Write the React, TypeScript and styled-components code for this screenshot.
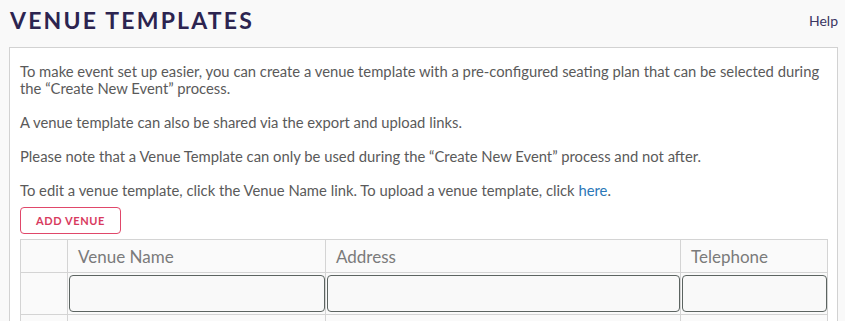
import React from 'react';
import styled, { createGlobalStyle } from 'styled-components';

const GlobalStyle = createGlobalStyle`
  html, body {
    margin: 0;
    padding: 0;
    background: #f9f9f9;
  }
  body {
    font-family: 'Lato', 'Noto Sans', sans-serif;
    color: #5a5a5a;
  }
`;

const Page = styled.div`
  padding: 0 7px 0 9px;
`;

const Header = styled.header`
  display: flex;
  align-items: center;
  justify-content: space-between;
  height: 40px;
  padding: 0 0 7px 1px;
`;

const Title = styled.h1`
  margin: 0;
  font-size: 23px;
  font-weight: 700;
  letter-spacing: 2.2px;
  color: #2c2450;
`;

const HelpLink = styled.a`
  font-size: 14px;
  color: #3a3562;
  text-decoration: none;
`;

const Panel = styled.section`
  background: #fff;
  border: 1px solid #d2d2d2;
  border-bottom: none;
  padding: 15px 10px 0;
  min-height: 280px;
`;

const Para = styled.p`
  margin: 0 0 17px;
  font-size: 14.8px;
  line-height: 17px;
  &:last-of-type {
    margin-bottom: 8px;
  }
`;

const InlineLink = styled.a`
  color: #2b78b8;
  text-decoration: none;
`;

const OutlineButton = styled.button`
  display: block;
  height: 27px;
  width: 101px;
  padding: 0;
  background: #fff;
  border: 1px solid #e0476a;
  border-radius: 4px;
  color: #d83a5e;
  font-family: inherit;
  font-size: 11px;
  font-weight: 700;
  letter-spacing: 0.6px;
  margin-bottom: 5px;
`;

const Table = styled.table`
  width: 807px;
  border-collapse: collapse;
  table-layout: fixed;
  background: #fafafa;
`;

const Th = styled.th<{ $w: number }>`
  width: ${({ $w }) => $w}px;
  height: 33px;
  border: 1px solid #d4d4d4;
  padding: 0 10px;
  text-align: left;
  font-size: 17px;
  font-weight: 400;
  color: #7b7b7b;
  box-sizing: border-box;
`;

const Td = styled.td`
  height: 41px;
  border: 1px solid #d4d4d4;
  padding: 2px 0 2px 1px;
  box-sizing: border-box;
`;

const FilterInput = styled.input`
  display: block;
  width: 100%;
  height: 37px;
  box-sizing: border-box;
  border: 1px solid #5c6461;
  border-radius: 4px;
  background: #f9f9f9;
  font-family: inherit;
  font-size: 14px;
  padding: 0 8px;
`;

const columns = [
  { label: '', width: 47 },
  { label: 'Venue Name', width: 258 },
  { label: 'Address', width: 355 },
  { label: 'Telephone', width: 147 },
];

export default function App() {
  return (
    <>
      <GlobalStyle />
      <Page>
        <Header>
          <Title>VENUE TEMPLATES</Title>
          <HelpLink href="#">Help</HelpLink>
        </Header>
        <Panel>
          <Para>
            To make event set up easier, you can create a venue template with a pre-configured seating plan that can
            be selected during the “Create New Event” process.
          </Para>
          <Para>A venue template can also be shared via the export and upload links.</Para>
          <Para>
            Please note that a Venue Template can only be used during the “Create New Event” process and not after.
          </Para>
          <Para>
            To edit a venue template, click the Venue Name link. To upload a venue template, click{' '}
            <InlineLink href="#">here</InlineLink>.
          </Para>
          <OutlineButton>ADD VENUE</OutlineButton>
          <Table>
            <thead>
              <tr>
                {columns.map((c) => (
                  <Th key={c.width} $w={c.width}>
                    {c.label}
                  </Th>
                ))}
              </tr>
            </thead>
            <tbody>
              <tr>
                <Td />
                <Td>
                  <FilterInput />
                </Td>
                <Td>
                  <FilterInput />
                </Td>
                <Td>
                  <FilterInput />
                </Td>
              </tr>
              <tr>
                <Td />
                <Td />
                <Td />
                <Td />
              </tr>
            </tbody>
          </Table>
        </Panel>
      </Page>
    </>
  );
}
